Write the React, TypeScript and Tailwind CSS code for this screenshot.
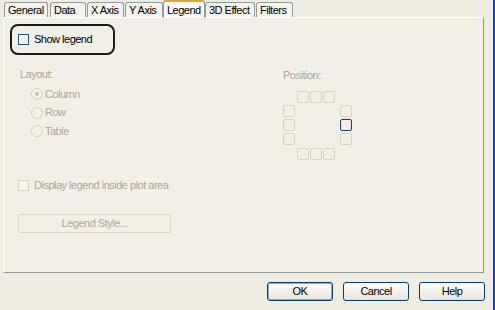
import React from 'react';

const tabs = [
  { label: 'General', w: 'w-[44px] mr-[2px]' },
  { label: 'Data', w: 'w-[36px] mr-[1px]' },
  { label: 'X Axis', w: 'w-[37px] mr-[1px]' },
  { label: 'Y Axis', w: 'w-[38px]' },
  { label: 'Legend', w: 'w-[42px]' },
  { label: '3D Effect', w: 'w-[50px] mr-[1px]' },
  { label: 'Filters', w: 'w-[37px]' },
];

function Radio({ label, checked }: { label: string; checked?: boolean }) {
  return (
    <div className="flex items-center h-[18.5px]">
      <span className="w-[12px] h-[12px] rounded-full border border-[#d6d2c2] bg-[#f3f1e8] flex items-center justify-center">
        {checked && <span className="w-[4px] h-[4px] rounded-full bg-[#c4c0b0]" />}
      </span>
      <span className="ml-[2px] text-[#aca899]">{label}</span>
    </div>
  );
}

function Cell({ col, row, selected }: { col: number; row: number; selected?: boolean }) {
  const pos: Record<string, string> = {
    '2-1': 'col-start-2 row-start-1',
    '3-1': 'col-start-3 row-start-1',
    '4-1': 'col-start-4 row-start-1',
    '1-2': 'col-start-1 row-start-2',
    '1-3': 'col-start-1 row-start-3',
    '1-4': 'col-start-1 row-start-4',
    '5-2': 'col-start-5 row-start-2',
    '5-3': 'col-start-5 row-start-3',
    '5-4': 'col-start-5 row-start-4',
    '2-5': 'col-start-2 row-start-5',
    '3-5': 'col-start-3 row-start-5',
    '4-5': 'col-start-4 row-start-5',
  };
  return (
    <span
      className={`${pos[`${col}-${row}`]} w-[12px] h-[12px] rounded-[2px] border ${
        selected ? 'border-[#1e3d6e]' : 'border-[#d8d4c4]'
      }`}
    />
  );
}

export default function App() {
  return (
    <div
      className="relative w-[495px] h-[310px] bg-[#efede2] text-[11px] leading-[13px] tracking-[-0.5px] text-black overflow-hidden"
      style={{ fontFamily: '"Liberation Sans", Arial, sans-serif' }}
    >
      {/* right window edge */}
      <div className="absolute right-0 top-0 w-[2px] h-full bg-[#0a3fd6]" />

      {/* tabs */}
      <div className="flex items-end h-[17px] pl-[4px]">
        {tabs.map((t) => {
          const active = t.label === 'Legend';
          return (
            <div
              key={t.label}
              className={`${t.w} flex items-center pl-[3px] border border-b-0 rounded-t-[3px] ${
                active
                  ? 'h-[18px] -mb-px relative z-10 bg-[#fbfbf9] border-[#919b9c] border-t-2 border-t-[#e6a12e]'
                  : 'h-[15px] bg-[#f4f3ee] border-[#919b9c]'
              }`}
            >
              {t.label}
            </div>
          );
        })}
      </div>

      {/* panel */}
      <div className="ml-[3px] w-[481px] h-[256px] border border-[#919b9c] border-l-white border-t-white bg-[#f1efe6]">
        <div className="ml-[6px] mt-[6px] w-[105px] h-[31px] rounded-[8px] border-2 border-[#1c1c1c] flex items-center pl-[6px]">
          <span className="w-[11px] h-[11px] border border-[#1c5180] bg-[#f6f6f2]" />
          <span className="ml-[5px]">Show legend</span>
        </div>

        <div className="flex">
          <div className="w-[263px] pl-[16px]">
            <div className="mt-[13px] text-[#aca899]">Layout:</div>
            <div className="ml-[11px] mt-[4px] flex flex-col">
              <Radio label="Column" checked />
              <Radio label="Row" />
              <Radio label="Table" />
            </div>
            <div className="mt-[38px] flex items-center -ml-[2px]">
              <span className="w-[11px] h-[11px] border border-[#d6d2c2] bg-[#f6f5ee]" />
              <span className="ml-[5px] text-[#aca899]">Display legend inside plot area</span>
            </div>
            <div className="mt-[22px] -ml-[2px] w-[153px] h-[19px] border border-[#dcd8c8] rounded-[2px] flex items-center justify-center text-[#aca899]">
              Legend Style...
            </div>
          </div>

          <div className="pl-[16px]">
            <div className="mt-[14px] text-[#aca899]">Position:</div>
            <div className="mt-[9px] grid grid-cols-[14px_13px_13px_17px_12px] grid-rows-[14px_14px_14px_15px_12px]">
              <Cell col={2} row={1} />
              <Cell col={3} row={1} />
              <Cell col={4} row={1} />
              <Cell col={1} row={2} />
              <Cell col={1} row={3} />
              <Cell col={1} row={4} />
              <Cell col={5} row={2} />
              <Cell col={5} row={3} selected />
              <Cell col={5} row={4} />
              <Cell col={2} row={5} />
              <Cell col={3} row={5} />
              <Cell col={4} row={5} />
            </div>
          </div>
        </div>
      </div>

      {/* buttons */}
      <div className="flex justify-end gap-[10px] mt-[9px] pr-[10px]">
        {['OK', 'Cancel', 'Help'].map((b) => (
          <button
            key={b}
            className={`w-[66px] h-[19px] rounded-[3px] border border-[#003c74] bg-gradient-to-b from-white to-[#e6e4da] flex items-center justify-center ${
              b === 'OK' ? 'shadow-[inset_0_0_0_1px_#8db2e3]' : ''
            }`}
          >
            {b}
          </button>
        ))}
      </div>
    </div>
  );
}
